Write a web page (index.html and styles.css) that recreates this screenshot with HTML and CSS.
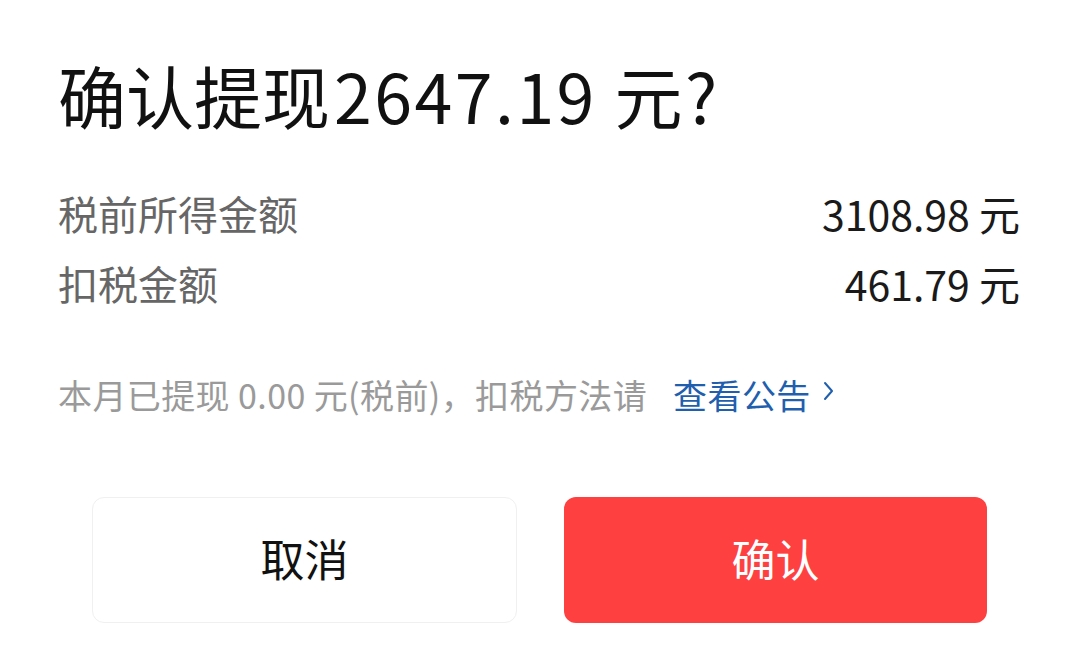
FILE: index.html
```html
<!DOCTYPE html>
<html lang="zh-CN">
<head>
<meta charset="utf-8">
<link rel="stylesheet" href="styles.css">
</head>
<body>
<div class="dialog">
  <h1 class="title">确认提现<span class="title-num">2647.19 元?</span></h1>
  <div class="rows">
    <div class="row"><span class="label">税前所得金额</span><span class="value">3108.98 元</span></div>
    <div class="row"><span class="label">扣税金额</span><span class="value">461.79 元</span></div>
  </div>
  <p class="note">本月已提现 0.00 元(税前)，扣税方法请 <span class="link">查看公告<svg class="chev" viewBox="0 0 12 20" width="12" height="20"><path d="M2 2 L9 10 L2 18" fill="none" stroke="#1f5fae" stroke-width="2" stroke-linecap="round" stroke-linejoin="round"/></svg></span></p>
  <div class="buttons">
    <button class="btn cancel">取消</button>
    <button class="btn ok">确认</button>
  </div>
</div>
</body>
</html>
```
FILE: styles.css
```css
* { box-sizing: border-box; }
html, body { margin: 0; padding: 0; background: #fff; }
body { font-family: "Noto Sans CJK SC", "Noto Sans", sans-serif; }
.dialog { width: 1078px; height: 667px; padding-top: 55px; }
.title {
  margin: 0; padding: 0 58px;
  font-size: 68px; line-height: 80px; font-weight: 400; color: #111;
}
.title-num { letter-spacing: 2.5px; margin-left: 4px; }
.rows { margin-top: 43px; padding: 0 58px; }
.row { display: flex; justify-content: space-between; height: 70px; line-height: 70px; }
.label { color: #666; font-size: 40px; }
.value { color: #1a1a1a; font-size: 41px; }
.note {
  margin: 53px 0 0; padding: 0 58px;
  font-size: 34px; line-height: 48px; color: #9a9a9a; letter-spacing: 0.4px;
}
.link { color: #1f5fae; margin-left: 18px; }
.chev { margin-left: 12px; vertical-align: 8px; }
.buttons { display: flex; gap: 47px; padding: 0 91px 0 92px; margin-top: 78px; }
.btn {
  flex: 1; height: 126px; border-radius: 12px;
  font-family: inherit; font-size: 44px; cursor: pointer; padding: 0 0 4px;
}
.cancel { background: #fff; border: 1px solid #f0f0f0; color: #111; }
.ok { background: #ff4040; border: none; color: #fff; }
```
